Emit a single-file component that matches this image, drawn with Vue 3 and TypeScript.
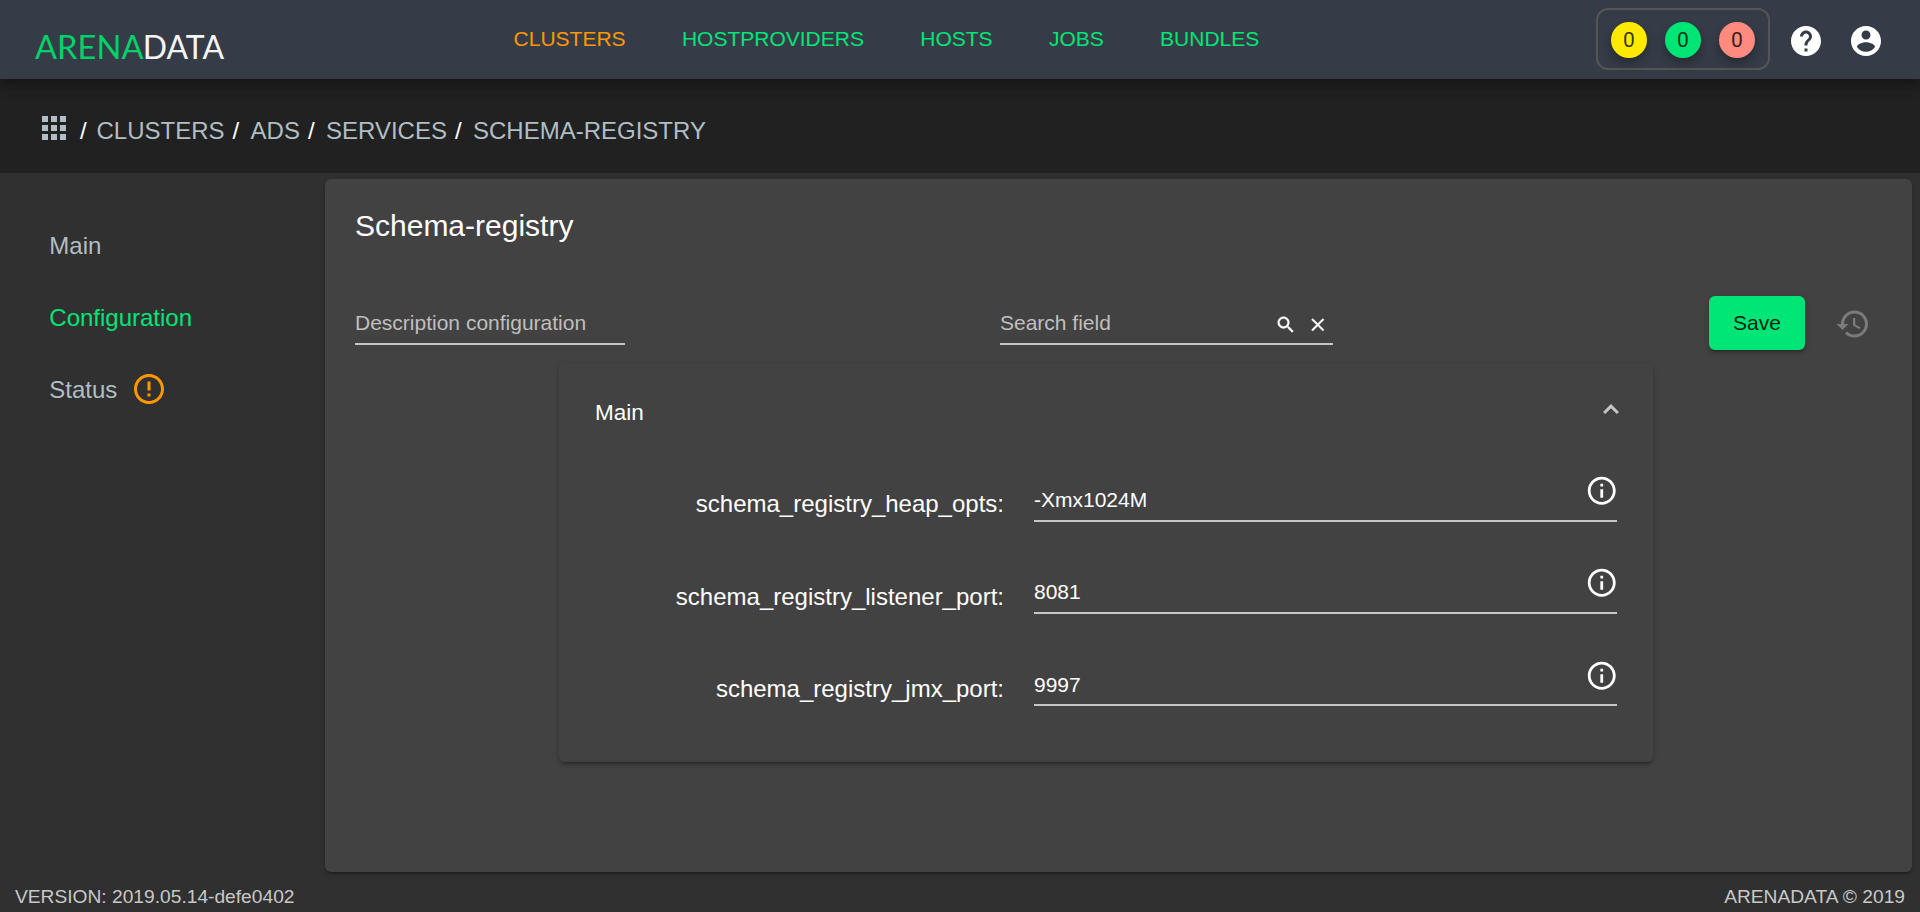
<script setup lang="ts">
interface NavLink { label: string; active?: boolean }
interface Field { name: string; value: string }

const navLinks: NavLink[] = [
  { label: 'CLUSTERS', active: true },
  { label: 'HOSTPROVIDERS' },
  { label: 'HOSTS' },
  { label: 'JOBS' },
  { label: 'BUNDLES' },
]
const counters = [
  { kind: 'running', count: 0 },
  { kind: 'success', count: 0 },
  { kind: 'failed', count: 0 },
]
const crumbs: string[] = ['CLUSTERS', 'ADS', 'SERVICES', 'SCHEMA-REGISTRY']
const sideLinks = [
  { label: 'Main', active: false, warn: false },
  { label: 'Configuration', active: true, warn: false },
  { label: 'Status', active: false, warn: true },
]
const fields: Field[] = [
  { name: 'schema_registry_heap_opts', value: '-Xmx1024M' },
  { name: 'schema_registry_listener_port', value: '8081' },
  { name: 'schema_registry_jmx_port', value: '9997' },
]
</script>

<template>
  <div class="page">
    <header class="topbar">
      <svg class="logo" width="200" height="50" viewBox="-4 0 200 50">
        <text x="0" y="36.3" textLength="108.5" lengthAdjust="spacingAndGlyphs" fill="#00d269">ARENA</text>
        <text x="107.8" y="36.3" textLength="81.2" lengthAdjust="spacingAndGlyphs" fill="#f5f5f5">DATA</text>
      </svg>
      <nav class="nav">
        <a v-for="l in navLinks" :key="l.label" :class="{ active: l.active }">{{ l.label }}</a>
      </nav>
      <div class="counters">
        <span v-for="c in counters" :key="c.kind" class="counter" :class="c.kind">{{ c.count }}</span>
      </div>
      <svg class="icon help" viewBox="0 0 24 24"><path d="M12 2C6.48 2 2 6.48 2 12s4.48 10 10 10 10-4.48 10-10S17.52 2 12 2zm1 17h-2v-2h2v2zm2.07-7.75l-.9.92C13.45 12.9 13 13.5 13 15h-2v-.5c0-1.1.45-2.1 1.17-2.83l1.24-1.26c.37-.36.59-.86.59-1.41 0-1.1-.9-2-2-2s-2 .9-2 2H8c0-2.21 1.79-4 4-4s4 1.79 4 4c0 .88-.36 1.68-.93 2.25z" /></svg>
      <svg class="icon account" viewBox="0 0 24 24"><path d="M12 2C6.48 2 2 6.48 2 12s4.48 10 10 10 10-4.48 10-10S17.52 2 12 2zm0 3c1.66 0 3 1.34 3 3s-1.34 3-3 3-3-1.34-3-3 1.34-3 3-3zm0 14.2c-2.5 0-4.71-1.28-6-3.22.03-1.99 4-3.08 6-3.08 1.99 0 5.97 1.09 6 3.08-1.29 1.94-3.5 3.22-6 3.22z" /></svg>
    </header>

    <div class="crumbs">
      <svg class="icon apps" viewBox="0 0 24 24"><path d="M4 8h4V4H4v4zm6 12h4v-4h-4v4zm-6 0h4v-4H4v4zm0-6h4v-4H4v4zm6 0h4v-4h-4v4zm6-10v4h4V4h-4zm-6 4h4V4h-4v4zm6 6h4v-4h-4v4zm0 6h4v-4h-4v4z" /></svg>
      <template v-for="c in crumbs" :key="c"><span class="slash">/</span><a>{{ c }}</a></template>
    </div>

    <div class="body">
      <aside class="side">
        <a v-for="s in sideLinks" :key="s.label" :class="{ active: s.active }">
          {{ s.label }}
          <svg v-if="s.warn" class="icon warn" viewBox="0 0 24 24"><path d="M11 15h2v2h-2zm0-8h2v6h-2zm.99-5C6.47 2 2 6.48 2 12s4.47 10 9.99 10C17.52 22 22 17.52 22 12S17.52 2 11.99 2zM12 20c-4.42 0-8-3.58-8-8s3.58-8 8-8 8 3.58 8 8-3.58 8-8 8z" /></svg>
        </a>
      </aside>

      <main class="card">
        <h1>Schema-registry</h1>
        <div class="tools">
          <div class="input description">Description configuration</div>
          <div class="input search">
            <span>Search field</span>
            <svg class="small" viewBox="0 0 24 24"><path d="M15.5 14h-.79l-.28-.27C15.41 12.59 16 11.11 16 9.5 16 5.91 13.09 3 9.5 3S3 5.91 3 9.5 5.91 16 9.5 16c1.61 0 3.09-.59 4.23-1.57l.27.28v.79l5 4.99L20.49 19l-4.99-5zm-6 0C7.01 14 5 11.99 5 9.5S7.01 5 9.5 5 14 7.01 14 9.5 11.99 14 9.5 14z" /></svg>
            <svg class="small" viewBox="0 0 24 24"><path d="M19 6.41L17.59 5 12 10.59 6.41 5 5 6.41 10.59 12 5 17.59 6.41 19 12 13.41 17.59 19 19 17.59 13.41 12z" /></svg>
          </div>
          <button class="save">Save</button>
          <svg class="icon history" viewBox="0 0 24 24"><path d="M13 3c-4.97 0-9 4.03-9 9H1l3.89 3.89.07.14L9 12H6c0-3.87 3.13-7 7-7s7 3.13 7 7-3.13 7-7 7c-1.93 0-3.68-.79-4.94-2.06l-1.42 1.42C8.27 19.99 10.51 21 13 21c4.97 0 9-4.03 9-9s-4.03-9-9-9zm-1 5v5l4.28 2.54.72-1.21-3.5-2.08V8H12z" /></svg>
        </div>

        <section class="panel">
          <div class="panel-head">
            <span>Main</span>
            <svg width="18" height="12" viewBox="0 0 18 12"><path d="M2.1 10 L9 3.1 L15.9 10" fill="none" stroke="#c6c6c6" stroke-width="3" /></svg>
          </div>
          <div class="rows">
            <div v-for="f in fields" :key="f.name" class="row">
              <label>{{ f.name }}:</label>
              <div class="value">
                <span>{{ f.value }}</span>
                <svg class="info" viewBox="0 0 24 24"><path d="M11 17h2v-6h-2v6zm1-15C6.48 2 2 6.48 2 12s4.48 10 10 10 10-4.48 10-10S17.52 2 12 2zm0 18c-4.41 0-8-3.59-8-8s3.59-8 8-8 8 3.59 8 8-3.59 8-8 8zM11 9h2V7h-2v2z" /></svg>
              </div>
            </div>
          </div>
        </section>
      </main>
    </div>

    <footer class="footer">
      <span>VERSION: 2019.05.14-defe0402</span>
      <span>ARENADATA © 2019</span>
    </footer>
  </div>
</template>

<style>
body { background: #303030; overflow: hidden; }
</style>

<style scoped>
.page {
  width: 1920px;
  height: 912px;
  display: flex;
  flex-direction: column;
  background: #303030;
  color: #fff;
  font-family: "Liberation Sans", Arial, sans-serif;
  font-size: 21px;
  overflow: hidden;
}
.page *, .page { box-sizing: border-box; }
svg { display: block; flex: none; fill: currentColor; }
.icon { width: 36px; height: 36px; }

.topbar {
  position: relative;
  z-index: 1;
  flex: none;
  height: 79px;
  display: flex;
  align-items: flex-start;
  background: #353c47;
  box-shadow: 0 4px 8px -1px rgba(0, 0, 0, .2), 0 7px 12px 0 rgba(0, 0, 0, .14), 0 2px 20px 0 rgba(0, 0, 0, .1);
}
.logo { margin: 23px 0 0 31px; font: 400 32px Lato, sans-serif; }
.nav {
  display: flex;
  gap: 56.3px;
  margin-left: 282.6px;
  line-height: 77px;
  color: #00e676;
}
.nav .active { color: #ff9800; }
.counters {
  display: flex;
  gap: 18px;
  height: 62px;
  margin: 8px 0 0 auto;
  padding: 12px 13px;
  border: 2px solid #555;
  border-radius: 12px;
}
.counter {
  width: 36px;
  height: 36px;
  border-radius: 50%;
  font-family: Roboto, sans-serif;
  line-height: 36px;
  text-align: center;
  color: rgba(0, 0, 0, .8);
  box-shadow: 0 4px 8px -1px rgba(0, 0, 0, .2), 0 7px 12px rgba(0, 0, 0, .14);
}
.running { background: #ffea00; }
.success { background: #00e676; }
.failed { background: #ff8a80; }
.help { margin: 23px 0 0 18px; }
.account { margin: 23px 36px 0 24px; }

.crumbs {
  flex: none;
  height: 94px;
  padding: 9px 0 0 36px;
  display: flex;
  align-items: center;
  background: #212121;
  color: #b0bec5;
  font-size: 24px;
  line-height: 28px;
}
.apps { margin: -5px 0 0; }
.slash { margin: 0 11.4px 0 8px; color: #fff; }
.apps + .slash { margin-right: 9.8px; }

.body { flex: none; height: 699px; display: flex; }
.side { width: 325px; padding: 36px 0 0 49.3px; font-size: 24px; color: #b0bec5; }
.side a { height: 72px; display: flex; align-items: center; gap: 13.7px; line-height: 27px; }
.side .active { color: #00e676; }
.warn { color: #ff9800; }

.card {
  width: 1587px;
  margin-top: 6px;
  background: #424242;
  border-radius: 6px;
  box-shadow: 0 3px 2px -2px rgba(0, 0, 0, .2), 0 2px 2px rgba(0, 0, 0, .14), 0 2px 5px rgba(0, 0, 0, .12);
}
h1 { margin: 29px 0 0 30px; font-size: 30px; font-weight: 400; line-height: 36px; }
.tools { display: flex; height: 54px; margin: 52px 44px 0 30px; }
.input {
  height: 49px;
  display: flex;
  padding-top: 15px;
  line-height: 24px;
  color: #bfbfbf;
  border-bottom: 2px solid #c6c6c6;
}
.description { width: 270px; }
.search { width: 333px; margin-left: 375px; }
.search span { flex: none; width: 275.2px; }
.small { width: 21.6px; height: 21.6px; margin: 2.7px 10.4px 0 0; color: #fff; stroke: currentColor; stroke-width: .4; }
.small + .small { margin-right: 0; }
.save {
  width: 96px;
  height: 54px;
  margin-left: auto;
  padding: 0;
  border: 0;
  border-radius: 6px;
  background: #00e676;
  color: rgba(0, 0, 0, .87);
  font: 21px "Liberation Sans", Arial, sans-serif;
  box-shadow: 0 4px 2px -3px rgba(0, 0, 0, .2), 0 3px 3px rgba(0, 0, 0, .14), 0 2px 7px rgba(0, 0, 0, .12);
}
.history { margin: 10px -3px 0 30px; color: #7b7b7b; }

.panel {
  width: 1094px;
  height: 398px;
  margin: 14px 0 0 234px;
  padding: 0 36px;
  border-radius: 6px;
  box-shadow: 0 4px 2px -3px rgba(0, 0, 0, .2), 0 3px 3px rgba(0, 0, 0, .14), 0 2px 7px rgba(0, 0, 0, .12);
}
.panel-head { display: flex; justify-content: space-between; font-size: 22.5px; line-height: 26px; padding-top: 36px; }
.panel-head svg { margin: 3px -3px 0 0; }
.rows { padding-top: 39px; }
.row { display: flex; height: 92px; }
label { width: 409px; padding-top: 25px; text-align: right; font-size: 24px; line-height: 28px; }
.row + .row label { padding-top: 26px; }
.value {
  display: flex;
  justify-content: space-between;
  width: 583px;
  height: 57px;
  margin-left: 30px;
  padding-top: 23px;
  line-height: 24px;
  border-bottom: 2px solid #c6c6c6;
}
.info { width: 33.5px; height: 33.5px; margin: -13.8px -1.5px 0 0; }
.row:last-child .value { padding-top: 24px; }

.footer {
  flex: 1;
  display: flex;
  justify-content: space-between;
  padding: 14px 15px 0;
  font-size: 19.2px;
  line-height: 22px;
  color: #c8c8c8;
}
</style>
